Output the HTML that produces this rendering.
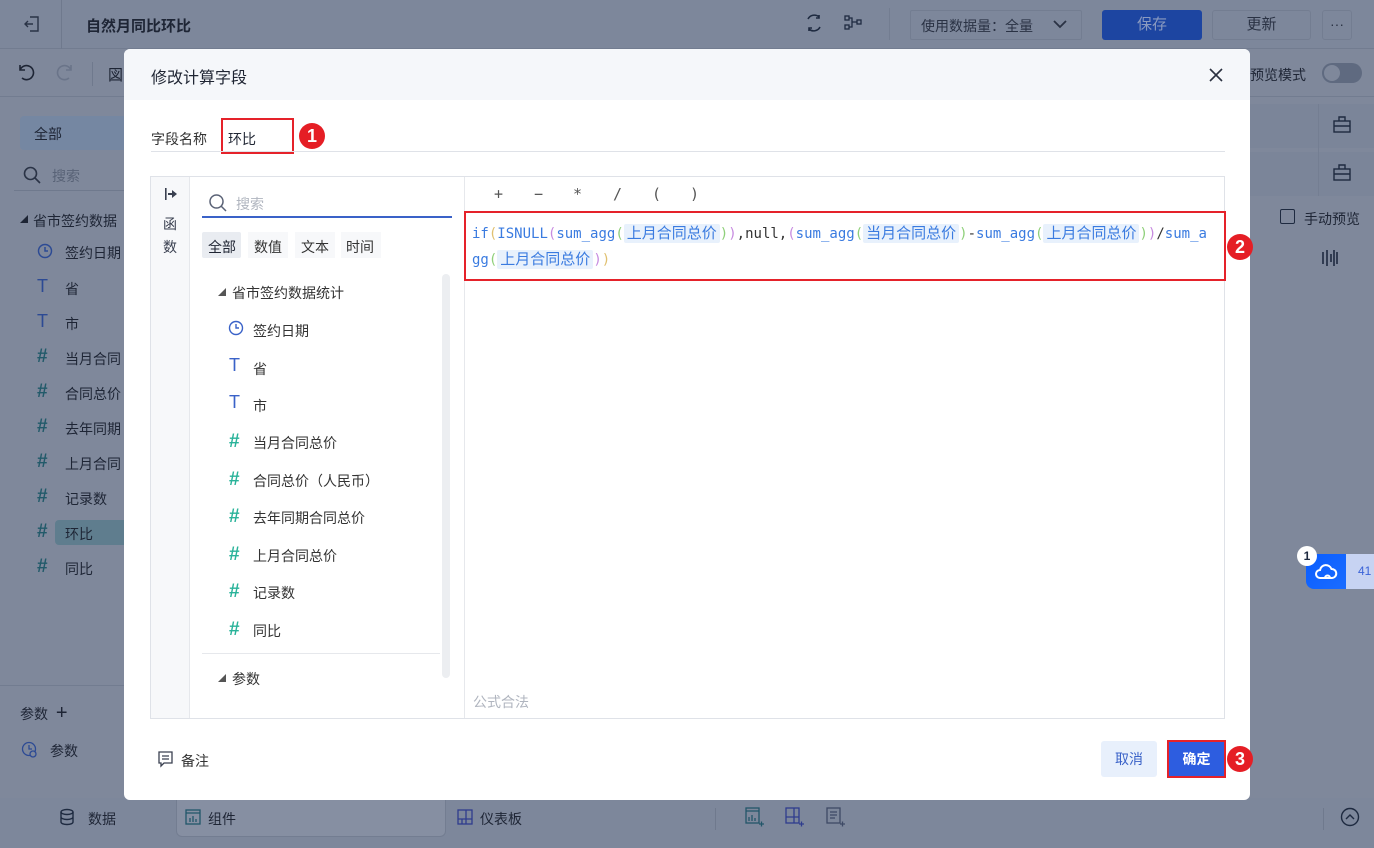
<!DOCTYPE html>
<html><head><meta charset="utf-8"><style>
*{margin:0;padding:0;box-sizing:border-box}
body{width:1374px;height:848px;overflow:hidden;position:relative;background:#7f889b;font-family:"Liberation Sans","Noto Sans CJK SC",sans-serif;font-size:14px;color:#1f2533}
.a{position:absolute}
.ov{color:#1e2535}
.mono{font-family:"DejaVu Sans Mono","Liberation Mono",monospace;font-size:14px}
.tk{background:#e8f1fc;color:#3a7be0;padding:1px 3px;border-radius:2px;font-family:"Liberation Sans","Noto Sans CJK SC",sans-serif;font-size:15px}
.b{color:#3a7be0}.y{color:#e0c070}.p{color:#c78be0}.g{color:#8fd07a}
.badge{width:26px;height:26px;border-radius:50%;background:#e51e25;color:#fff;font-weight:bold;font-size:18px;text-align:center;line-height:26px}
.hash{color:#2ab39a;font-weight:bold;font-size:19px;line-height:19px}
.hashd{color:#225a6a;font-weight:bold;font-size:19px;line-height:19px}
.op{position:absolute;top:136px;color:#555;font-family:"DejaVu Sans Mono",monospace;font-size:15px}
</style></head><body>
<div class="a" style="left:0;top:0;width:1374px;height:49px;background:#7d879b;border-bottom:1px solid #727c90"></div>
<div class="a" style="left:61px;top:0;width:1px;height:49px;background:#6f798d"></div>
<svg class="a" style="left:22px;top:14px" width="20" height="20" viewBox="0 0 20 20" fill="none" stroke="#2a3346" stroke-width="1.4"><path d="M8 3h8v14H8M11 10H3M6 7l-3 3 3 3"/></svg>
<div class="a ov" style="left:86px;top:15px;font-size:15px;font-weight:bold">自然月同比环比</div>
<svg class="a" style="left:804px;top:13px" width="20" height="20" viewBox="0 0 20 20" fill="none" stroke="#1e2a40" stroke-width="1.6"><path d="M4 6a7 7 0 0111-2M16 14a7 7 0 01-11 2"/><path d="M15 2v3h-3M5 18v-3h3"/></svg>
<svg class="a" style="left:843px;top:14px" width="20" height="18" viewBox="0 0 20 18" fill="none" stroke="#1e2a40" stroke-width="1.3"><rect x="2" y="2" width="4" height="4"/><rect x="2" y="11" width="4" height="4"/><rect x="14" y="6" width="4" height="4"/><path d="M6 4h3v9H6M9 8h5"/></svg>
<div class="a" style="left:889px;top:8px;width:1px;height:32px;background:#737d91"></div>
<div class="a ov" style="left:910px;top:10px;width:172px;height:30px;border:1px solid #737d91;border-radius:2px;padding:5px 10px;color:#2a3244">使用数据量：全量</div>
<svg class="a" style="left:1052px;top:18px" width="16" height="12" viewBox="0 0 16 12" fill="none" stroke="#2a3244" stroke-width="1.8"><path d="M2 3l6 6 6-6"/></svg>
<div class="a" style="left:1102px;top:10px;width:100px;height:30px;background:#1d45a1;border-radius:3px;color:#8a9ac0;text-align:center;line-height:30px;font-size:15px">保存</div>
<div class="a" style="left:1212px;top:10px;width:99px;height:30px;border:1px solid #737d91;border-radius:3px;color:#2a3244;text-align:center;line-height:28px;font-size:15px">更新</div>
<div class="a" style="left:1322px;top:10px;width:30px;height:30px;border:1px solid #737d91;border-radius:3px;color:#2a3244;text-align:center;line-height:26px">···</div>
<div class="a" style="left:0;top:96px;width:1374px;height:1px;background:#727c90"></div>
<svg class="a" style="left:16px;top:63px" width="20" height="18" viewBox="0 0 20 18" fill="none" stroke="#1e2535" stroke-width="1.6"><path d="M4 2v5h5M4 7a7 7 0 112 8"/></svg>
<svg class="a" style="left:55px;top:63px" width="20" height="18" viewBox="0 0 20 18" fill="none" stroke="#6a7489" stroke-width="1.6"><path d="M16 2v5h-5M16 7a7 7 0 10-2 8"/></svg>
<div class="a" style="left:92px;top:62px;width:1px;height:24px;background:#6f798d"></div>
<div class="a ov" style="left:108px;top:64px;font-size:15px">図</div>
<div class="a ov" style="left:1250px;top:65px">预览模式</div>
<div class="a" style="left:1322px;top:63px;width:40px;height:20px;border-radius:10px;background:#5f6a80"></div>
<div class="a" style="left:1324px;top:65px;width:16px;height:16px;border-radius:50%;background:#7f889b"></div>
<div class="a" style="left:20px;top:116px;width:110px;height:34px;background:#7587a2;border-radius:4px"></div>
<div class="a ov" style="left:34px;top:124px">全部</div>
<svg class="a" style="left:22px;top:165px" width="20" height="20" viewBox="0 0 20 20" fill="none" stroke="#2a3346" stroke-width="1.6"><circle cx="8.5" cy="8.5" r="6"/><path d="M13 13l5 5"/></svg>
<div class="a" style="left:52px;top:166px;color:#596377">搜索</div>
<div class="a" style="left:14px;top:190px;width:110px;height:1px;background:#6f798d"></div>
<div class="a ov" style="left:20px;top:214px;font-size:8px">◢</div>
<div class="a ov" style="left:33px;top:211px">省市签约数据</div>
<svg class="a" style="left:37px;top:243px" width="16" height="16" viewBox="0 0 16 16" fill="none" stroke="#2c4a94" stroke-width="1.5"><circle cx="8" cy="8" r="6.5"/><path d="M8 4v4h3"/></svg>
<div class="a ov" style="left:65px;top:243px">签约日期</div>
<div class="a" style="left:37px;top:276px;color:#2c4a94;font-size:18px">T</div><div class="a ov" style="left:65px;top:279px">省</div>
<div class="a" style="left:37px;top:311px;color:#2c4a94;font-size:18px">T</div><div class="a ov" style="left:65px;top:314px">市</div>
<div class="a hashd" style="left:37px;top:347px">#</div><div class="a ov" style="left:65px;top:349px">当月合同</div>
<div class="a hashd" style="left:37px;top:382px">#</div><div class="a ov" style="left:65px;top:384px">合同总价</div>
<div class="a hashd" style="left:37px;top:417px">#</div><div class="a ov" style="left:65px;top:419px">去年同期</div>
<div class="a hashd" style="left:37px;top:452px">#</div><div class="a ov" style="left:65px;top:454px">上月合同</div>
<div class="a hashd" style="left:37px;top:487px">#</div><div class="a ov" style="left:65px;top:489px">记录数</div>
<div class="a" style="left:55px;top:520px;width:70px;height:25px;background:#5f7d8e;border-radius:4px 0 0 4px"></div>
<div class="a hashd" style="left:37px;top:522px">#</div><div class="a ov" style="left:65px;top:524px">环比</div>
<div class="a hashd" style="left:37px;top:557px">#</div><div class="a ov" style="left:65px;top:559px">同比</div>
<div class="a" style="left:0;top:685px;width:124px;height:1px;background:#727c90"></div>
<div class="a ov" style="left:20px;top:702px">参数 <span style="font-size:20px;margin-left:4px">+</span></div>
<svg class="a" style="left:21px;top:741px" width="18" height="18" viewBox="0 0 18 18" fill="none" stroke="#2c4a94" stroke-width="1.3"><circle cx="8" cy="8" r="6.5"/><path d="M8 4v4h3"/><circle cx="12" cy="13" r="3" fill="#7f889b"/></svg>
<div class="a ov" style="left:50px;top:741px">参数</div>
<div class="a" style="left:1250px;top:104px;width:124px;height:44px;background:#7b8599"></div>
<div class="a" style="left:1250px;top:152px;width:124px;height:44px;background:#7b8599"></div>
<div class="a" style="left:1318px;top:104px;width:1px;height:92px;background:#747e92"></div>
<svg class="a" style="left:1333px;top:116px" width="18" height="17" viewBox="0 0 18 17" fill="none" stroke="#1e2a40" stroke-width="1.4"><rect x="1" y="5" width="16" height="11"/><path d="M6 5V1h6v4M1 10h16"/></svg>
<svg class="a" style="left:1333px;top:164px" width="18" height="17" viewBox="0 0 18 17" fill="none" stroke="#1e2a40" stroke-width="1.4"><rect x="1" y="5" width="16" height="11"/><path d="M6 5V1h6v4M1 10h16"/></svg>
<div class="a" style="left:1280px;top:209px;width:15px;height:15px;border:1.4px solid #1e2a40;border-radius:2px"></div>
<div class="a ov" style="left:1304px;top:209px">手动预览</div>
<svg class="a" style="left:1321px;top:249px" width="18" height="18" viewBox="0 0 18 18" stroke="#1e2a40" stroke-width="1.6"><path d="M2 3v12M6 1v16M10 5v8M13 1v16M16 3v12"/></svg>
<div class="a" style="left:1306px;top:554px;width:40px;height:35px;background:linear-gradient(135deg,#0a5dff,#1a6cff);border-radius:0 0 0 8px"></div>
<div class="a" style="left:1346px;top:554px;width:28px;height:35px;background:#c7d3f2"></div>
<div class="a" style="left:1358px;top:564px;color:#3a62d8;font-size:12px">41</div>
<svg class="a" style="left:1314px;top:562px" width="24" height="20" viewBox="0 0 24 20" fill="none" stroke="#fff" stroke-width="2"><path d="M6 16a4 4 0 010-8 6 6 0 0111.5-1A4.5 4.5 0 0118 16zM11 16a2.5 2.5 0 115 0"/></svg>
<div class="a" style="left:1297px;top:546px;width:20px;height:20px;border-radius:50%;background:#fff;text-align:center;line-height:20px;font-weight:bold;font-size:12px;color:#1e2a40">1</div>
<div class="a" style="left:0;top:798px;width:1374px;height:50px;background:#7d879b"></div>
<div class="a" style="left:176px;top:798px;width:270px;height:39px;background:#868fa2;border:1px solid #737d91;border-top:none;border-radius:0 0 6px 6px"></div>
<svg class="a" style="left:58px;top:808px" width="18" height="18" viewBox="0 0 18 18" fill="none" stroke="#1e2a40" stroke-width="1.4"><ellipse cx="9" cy="4" rx="6" ry="2.5"/><path d="M3 4v10c0 1.5 2.7 2.5 6 2.5s6-1 6-2.5V4M3 9c0 1.4 2.7 2.5 6 2.5S15 10.4 15 9"/></svg>
<div class="a ov" style="left:88px;top:809px">数据</div>
<svg class="a" style="left:185px;top:809px" width="16" height="16" viewBox="0 0 16 16" fill="none" stroke="#21566a" stroke-width="1.3"><rect x="1" y="1" width="14" height="14"/><path d="M1 4h14M5 13V9M8 13V7M11 13v-3"/></svg>
<div class="a ov" style="left:208px;top:809px">组件</div>
<svg class="a" style="left:457px;top:809px" width="16" height="16" viewBox="0 0 16 16" fill="none" stroke="#2f3c8e" stroke-width="1.3"><rect x="1" y="1" width="14" height="14"/><path d="M9 1v14M1 10h14M5 10v5"/></svg>
<div class="a ov" style="left:480px;top:809px">仪表板</div>
<div class="a" style="left:715px;top:808px;width:1px;height:22px;background:#6f798d"></div>
<svg class="a" style="left:745px;top:807px" width="20" height="20" viewBox="0 0 20 20" fill="none" stroke="#22566a" stroke-width="1.3"><rect x="1" y="1" width="13" height="15"/><path d="M1 4h13M4 14v-4M7 14V8M10 14v-3M14 17h5M16.5 14.5v5"/></svg>
<svg class="a" style="left:785px;top:807px" width="20" height="20" viewBox="0 0 20 20" fill="none" stroke="#2f3c8e" stroke-width="1.3"><rect x="1" y="1" width="13" height="15"/><path d="M9 1v15M1 10h13M14 17h5M16.5 14.5v5"/></svg>
<svg class="a" style="left:826px;top:807px" width="20" height="20" viewBox="0 0 20 20" fill="none" stroke="#3e4a66" stroke-width="1.3"><rect x="1" y="1" width="13" height="15"/><path d="M4 5h7M4 8h7M4 11h5M14 17h5M16.5 14.5v5"/></svg>
<div class="a" style="left:1323px;top:808px;width:1px;height:22px;background:#6f798d"></div>
<svg class="a" style="left:1340px;top:807px" width="20" height="20" viewBox="0 0 20 20" fill="none" stroke="#1e2a40" stroke-width="1.4"><circle cx="10" cy="10" r="8.5"/><path d="M6 12l4-4 4 4"/></svg>
<div class="a" style="left:124px;top:49px;width:1126px;height:751px;background:#fff;border-radius:6px;overflow:hidden">
 <div class="a" style="left:0;top:0;width:1126px;height:51px;background:#f5f7fa"></div>
 <div class="a" style="left:27px;top:15px;font-size:16px;color:#1f2533">修改计算字段</div>
 <svg class="a" style="left:1084px;top:18px" width="16" height="16" viewBox="0 0 16 16" stroke="#2a3040" stroke-width="1.6"><path d="M2 2l12 12M14 2L2 14"/></svg>
 <div class="a" style="left:27px;top:80px;color:#333">字段名称</div>
 <div class="a" style="left:97px;top:69px;width:73px;height:36px;border:2px solid #e5222a"></div>
 <div class="a" style="left:104px;top:80px;color:#1f2533">环比</div>
 <div class="a badge" style="left:175px;top:74px">1</div>
 <div class="a" style="left:27px;top:102px;width:1074px;height:1px;background:#dfe2e8"></div>
 <div class="a" style="left:26px;top:127px;width:1075px;height:543px;border:1px solid #dfe2e8"></div>
 <div class="a" style="left:27px;top:128px;width:39px;height:541px;background:#f7f8fa;border-right:1px solid #e6e8ec"></div>
 <svg class="a" style="left:40px;top:138px" width="14" height="14" viewBox="0 0 14 14" fill="#3a4050"><rect x="1" y="1" width="1.6" height="12"/><path d="M4 6h4V3l5 4-5 4V8H4z"/></svg>
 <div class="a" style="left:39px;top:164px;color:#3a4050;line-height:23px">函<br>数</div>
 <div class="a" style="left:340px;top:128px;width:1px;height:541px;background:#e6e8ec"></div>
 <svg class="a" style="left:84px;top:144px" width="20" height="20" viewBox="0 0 20 20" fill="none" stroke="#5a6276" stroke-width="1.5"><circle cx="8.5" cy="8.5" r="6.5"/><path d="M13 13l5 5"/></svg>
 <div class="a" style="left:112px;top:145px;color:#b0b5bf">搜索</div>
 <div class="a" style="left:78px;top:167px;width:250px;height:1.5px;background:#3a62c8"></div>
 <div class="a" style="left:78px;top:183px;width:39px;height:26px;background:#e9ecf1;border-radius:2px"></div>
 <div class="a" style="left:84px;top:188px">全部</div>
 <div class="a" style="left:124px;top:183px;width:40px;height:26px;background:#f7f8fa"></div>
 <div class="a" style="left:130px;top:188px;color:#333">数值</div>
 <div class="a" style="left:171px;top:183px;width:40px;height:26px;background:#f7f8fa"></div>
 <div class="a" style="left:177px;top:188px;color:#333">文本</div>
 <div class="a" style="left:217px;top:183px;width:40px;height:26px;background:#f7f8fa"></div>
 <div class="a" style="left:222px;top:188px;color:#333">时间</div>
 <div class="a" style="left:318px;top:225px;width:8px;height:404px;background:#eceef1;border-radius:4px"></div>
 <div class="a" style="left:94px;top:238px;font-size:8px;color:#555">◢</div>
 <div class="a" style="left:108px;top:234px;color:#333">省市签约数据统计</div>
 <svg class="a" style="left:104px;top:271px" width="16" height="16" viewBox="0 0 16 16" fill="none" stroke="#3a62c8" stroke-width="1.4"><circle cx="8" cy="8" r="6.5"/><path d="M8 4v4h3"/></svg>
 <div class="a" style="left:129px;top:272px;color:#333">签约日期</div>
 <div class="a" style="left:105px;top:306px;color:#3a62c8;font-size:18px">T</div><div class="a" style="left:129px;top:310px;color:#333">省</div>
 <div class="a" style="left:105px;top:343px;color:#3a62c8;font-size:18px">T</div><div class="a" style="left:129px;top:347px;color:#333">市</div>
 <div class="a hash" style="left:105px;top:383px">#</div><div class="a" style="left:129px;top:384px;color:#333">当月合同总价</div>
 <div class="a hash" style="left:105px;top:421px">#</div><div class="a" style="left:129px;top:422px;color:#333">合同总价（人民币）</div>
 <div class="a hash" style="left:105px;top:458px">#</div><div class="a" style="left:129px;top:459px;color:#333">去年同期合同总价</div>
 <div class="a hash" style="left:105px;top:496px">#</div><div class="a" style="left:129px;top:497px;color:#333">上月合同总价</div>
 <div class="a hash" style="left:105px;top:533px">#</div><div class="a" style="left:129px;top:534px;color:#333">记录数</div>
 <div class="a hash" style="left:105px;top:571px">#</div><div class="a" style="left:129px;top:572px;color:#333">同比</div>
 <div class="a" style="left:78px;top:604px;width:238px;height:1px;background:#e6e8ec"></div>
 <div class="a" style="left:94px;top:624px;font-size:8px;color:#555">◢</div>
 <div class="a" style="left:108px;top:620px;color:#333">参数</div>
 <div class="op" style="left:370px">+</div>
 <div class="op" style="left:410px">−</div>
 <div class="op" style="left:449px">*</div>
 <div class="op" style="left:489px">/</div>
 <div class="op" style="left:528px">(</div>
 <div class="op" style="left:566px">)</div>
 <div class="a" style="left:340px;top:162px;width:762px;height:70px;border:2px solid #e5222a"></div>
 <div class="a mono" style="left:348px;top:173px;white-space:nowrap;color:#333"><span class="b">if</span><span class="y">(</span><span class="b">ISNULL</span><span class="p">(</span><span class="b">sum_agg</span><span class="g">(</span><span class="tk">上月合同总价</span><span class="g">)</span><span class="p">)</span>,null,<span class="p">(</span><span class="b">sum_agg</span><span class="g">(</span><span class="tk">当月合同总价</span><span class="g">)</span>-<span class="b">sum_agg</span><span class="g">(</span><span class="tk">上月合同总价</span><span class="g">)</span><span class="p">)</span>/<span class="b">sum_a</span></div>
 <div class="a mono" style="left:348px;top:199px;white-space:nowrap"><span class="b">gg</span><span class="g">(</span><span class="tk">上月合同总价</span><span class="p">)</span><span class="y">)</span></div>
 <div class="a" style="left:349px;top:643px;color:#b0b5bf">公式合法</div>
 <svg class="a" style="left:33px;top:701px" width="17" height="18" viewBox="0 0 17 18" fill="none" stroke="#3a4050" stroke-width="1.3"><path d="M2 2h13v11H7l-3 3v-3H2z M5 6h7M5 9h7"/></svg>
 <div class="a" style="left:57px;top:702px;color:#333">备注</div>
 <div class="a" style="left:977px;top:692px;width:56px;height:36px;background:#e8f0fc;border-radius:3px;color:#3a62c8;text-align:center;line-height:36px">取消</div>
 <div class="a" style="left:1043px;top:691px;width:59px;height:38px;border:2px solid #e5222a;background:#2d5de0;color:#fff;text-align:center;line-height:34px;font-weight:bold">确定</div>
</div>
<div class="a badge" style="left:1227px;top:234px">2</div>
<div class="a badge" style="left:1227px;top:746px">3</div>
</body></html>
